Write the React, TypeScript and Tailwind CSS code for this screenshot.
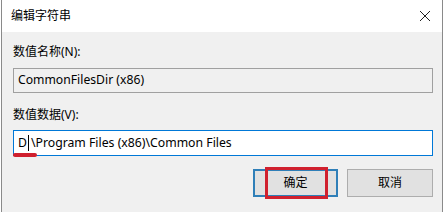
import React from 'react';

const font = { fontFamily: '"Noto Sans", "Noto Sans CJK SC", sans-serif' };

export default function App() {
  return (
    <div className="w-[445px] h-[212px] bg-white overflow-hidden" style={font}>
      <div className="relative ml-[1px] w-[442px] h-[212px] border-x border-[#8a8a8a] flex flex-col text-[12px] text-black">
        {/* title bar */}
        <div className="h-[32px] shrink-0 bg-white flex items-center justify-between pl-[9px] pr-[10px]">
          <span className="text-[12px] leading-none">编辑字符串</span>
          <svg width="12" height="12" viewBox="0 0 12 12" className="mr-[1px]">
            <path d="M1 1 L11 11 M11 1 L1 11" stroke="#222" strokeWidth="1" fill="none" />
          </svg>
        </div>

        {/* body */}
        <div className="flex-1 bg-[#f0f0f0] flex flex-col pl-[11px] pr-[9px]">
          <div className="mt-[12px] h-[16px] leading-[16px]">数值名称(N):</div>
          <div className="mt-[8px] h-[25px] border border-[#a0a0a0] bg-[#f0f0f0] flex items-center pl-[4px] text-[12.2px]">
            CommonFilesDir (x86)
          </div>

          <div className="mt-[14px] h-[16px] leading-[16px]">数值数据(V):</div>
          <div className="mt-[7px] h-[26px] border border-[#0078d7] bg-white flex items-center pl-[4px] text-[12.25px]">
            <span>D</span>
            <span className="w-[1px] h-[16px] bg-black ml-[1px] mr-[2px]" />
            <span>\Program Files (x86)\Common Files</span>
          </div>

          <div className="mt-[13px] flex justify-end gap-[9px]">
            <button className="relative w-[85px] h-[28px] border-2 border-[#2f7fb8] bg-[#e1e1e1] text-[12px]">
              确定
              <span className="absolute left-[10px] top-[-4px] w-[63px] h-[32px] border-[3px] border-[#d0202e]" />
            </button>
            <button className="w-[86px] h-[28px] border border-[#adadad] bg-[#e1e1e1] text-[12px]">
              取消
            </button>
          </div>
        </div>

        {/* red annotation */}
        <div className="absolute left-[11px] top-[153px] w-[24px] h-[4px] rounded-full bg-[#d0202e]" />
      </div>
    </div>
  );
}
